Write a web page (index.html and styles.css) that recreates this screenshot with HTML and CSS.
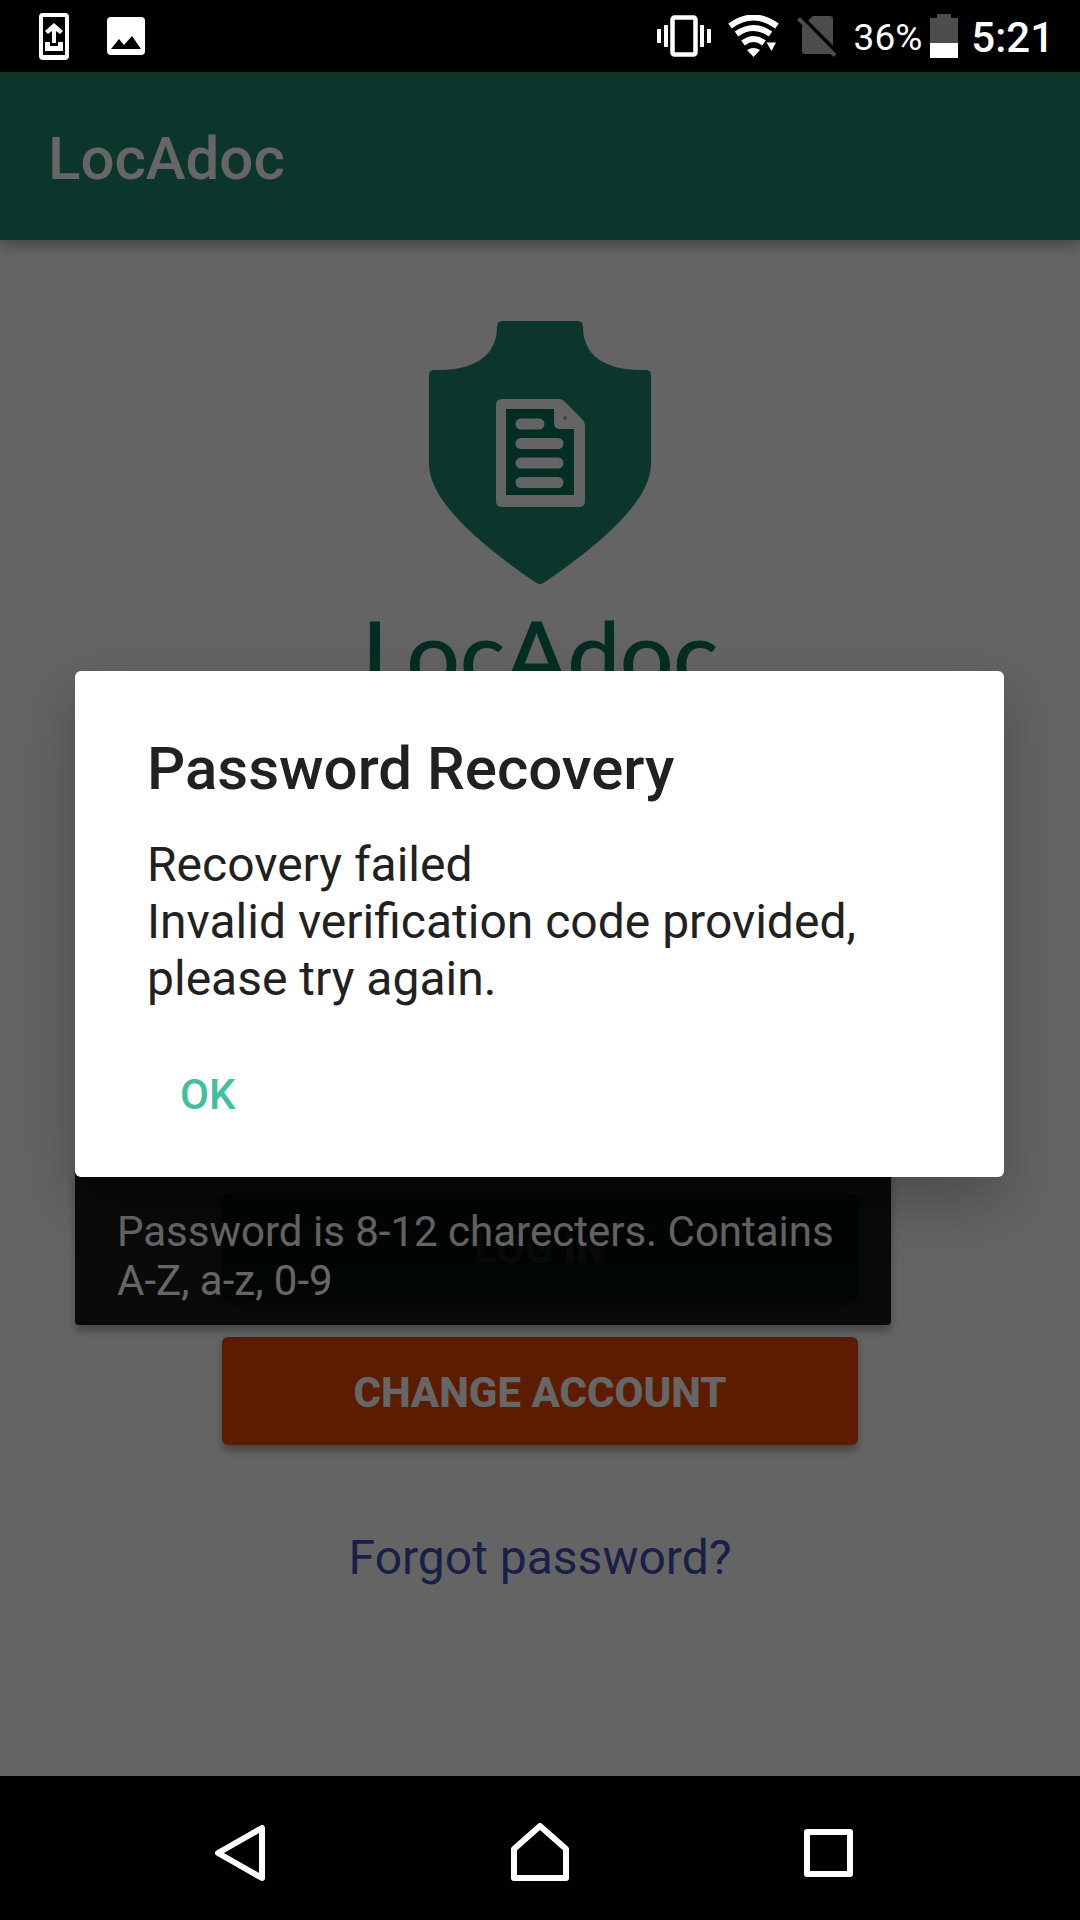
FILE: index.html
```html
<!DOCTYPE html>
<html lang="en">
<head>
<meta charset="utf-8">
<meta name="viewport" content="width=device-width, initial-scale=1">
<title>LocAdoc</title>
<link rel="stylesheet" href="styles.css">
</head>
<body>
<header class="status">
  <div class="status-left">
    <svg width="30" height="48" viewBox="0 0 30 48" aria-hidden="true"><path fill="#fff" fill-rule="evenodd" d="M4 1h22a4 4 0 0 1 4 4v39a4 4 0 0 1-4 4H4a4 4 0 0 1-4-4V5a4 4 0 0 1 4-4zm0 4v38h22V5z"/><path fill="#fff" d="M15 11l9 8-3 3-4-3v12h-4V19l-4 3-3-3zM6 30h5v4h8v-4h5v9H6z"/></svg>
    <svg width="38" height="38" viewBox="0 0 38 38" aria-hidden="true"><rect width="38" height="38" rx="4" fill="#fff"/><path d="M4 32l8-10 5 6 8-9 9 13z"/></svg>
  </div>
  <div class="status-right">
    <svg width="54" height="42" viewBox="0 0 54 42" aria-hidden="true"><rect x="15.500" y="2.500" width="23" height="37" rx="2" fill="none" stroke="#fff" stroke-width="4.500"/><path fill="#fff" d="M0 14h4v14H0zM7 10h4v22H7zM43 10h4v22h-4zM50 14h4v14h-4z"/></svg>
    <svg width="52" height="42" viewBox="0 0 52 42" aria-hidden="true"><g fill="none" stroke="#fff" stroke-width="6"><path d="M2 11Q25.500-6 49 11"/><path d="M8.500 19Q25.500 7 42.500 19"/><path d="M15 28Q25.500 20 36 28"/></g><path fill="#fff" d="M19 35q6.500-4 13 0l-6.500 7zM38.500 27.500H48l-4.500 8.500z"/></svg>
    <svg width="40" height="42" viewBox="0 0 40 42" aria-hidden="true"><path fill="#4d4d4d" d="M16 1h17q3 0 3 3v33q0 2-2 2H8q-3 0-3-3V12z"/><path d="M3 1l37 37" stroke="#000" stroke-width="5"/><path d="M1.500 3.500l36.500 37" stroke="#4d4d4d" stroke-width="4"/></svg>
    <span class="percent">36%</span>
    <svg class="battery" width="28" height="44" viewBox="0 0 28 44" aria-hidden="true"><path fill="#4d4d4d" d="M7 0h14v4h7v25H0V4h7z"/><path fill="#fff" d="M0 29h28v15H0z"/></svg>
    <span class="time">5:21</span>
  </div>
</header>

<div class="screen">
  <div class="appbar"><h1 class="appbar-title">LocAdoc</h1></div>
  <main class="content">
    <div class="brand">
      <svg width="224" height="264" viewBox="0 0 224 264" aria-hidden="true">
        <path fill="#20876b" d="M74 0h76q5 0 5 6c0 27 20 44 62 43q6-1 6 6v88c0 35-46 77-106 118q-5 4-10 0C47 220 1 178 1 143V55q0-7 6-6c42 1 62-16 62-43q0-6 5-6z"/>
        <path fill="#0a7357" d="M73 83h64l13 14v81H73z"/>
        <path fill="#fafafa" fill-rule="evenodd" d="M74 78h56q4 0 6 2l18 18q3 3 3 6v76q0 6-6 6H74q-6 0-6-6V84q0-6 6-6zm4 10v86h68v-66h-14q-6 0-6-6V88z"/>
        <path fill="none" stroke="#fafafa" stroke-width="11" stroke-linecap="round" d="M93 103h18M93 122.500h37M93 142h37M93 161.500h37"/>
        <circle cx="137" cy="97" r="2" fill="#8fb5a9"/>
      </svg>
      <p class="wordmark">LocAdoc</p>
    </div>
    <div class="actions">
      <button class="btn btn-login" type="button">LOG IN</button>
      <button class="btn btn-change" type="button">CHANGE ACCOUNT</button>
      <div class="hint">Password is 8-12 charecters. Contains A-Z, a-z, 0-9</div>
    </div>
    <a class="forgot" href="#">Forgot password?</a>
  </main>
  <div class="scrim">
    <section class="dialog" role="alertdialog" aria-labelledby="dialog-title">
      <h2 class="dialog-title" id="dialog-title">Password Recovery</h2>
      <p class="dialog-text">Recovery failed<br>Invalid verification code provided, please try again.</p>
      <button class="dialog-ok" type="button">OK</button>
    </section>
  </div>
</div>

<nav class="navbar">
  <button class="nav-btn" type="button" aria-label="Back"><svg width="76" height="60" viewBox="0 0 76 60" aria-hidden="true"><path d="M48 5v50L4 30z"/></svg></button>
  <button class="nav-btn" type="button" aria-label="Home"><svg width="60" height="60" viewBox="0 0 60 60" aria-hidden="true"><path d="M4 26L30 3l26 23v29H4z"/></svg></button>
  <button class="nav-btn" type="button" aria-label="Recent apps"><svg width="60" height="60" viewBox="0 0 60 60" aria-hidden="true"><path d="M9 9h43v42H9z"/></svg></button>
</nav>
</body>
</html>
```
FILE: styles.css
```css
* { box-sizing: border-box; }

body {
  margin: 0;
  min-height: 100vh;
  display: flex;
  flex-direction: column;
  background: #000;
  font-family: Roboto, "Liberation Sans", sans-serif;
}

h1, h2, p { margin: 0; }

svg { display: block; flex: none; }

button {
  margin: 0;
  padding: 0;
  border: 0;
  background: none;
  font-family: inherit;
}

/* System status bar */
.status {
  height: 72px;
  padding: 0 26px 0 39px;
  display: flex;
  align-items: center;
  justify-content: space-between;
  color: #fff;
}

.status-left { display: flex; align-items: center; gap: 38px; }

.status-right { display: flex; align-items: center; gap: 17px; }

.percent { padding-top: 4px; font-size: 37px; line-height: 48px; }

.battery { margin: 0 -4px 0 -9px; }

.time { padding-top: 4px; font-size: 42px; line-height: 48px; font-weight: 500; }

/* App */
.screen {
  position: relative;
  flex: 1;
  display: flex;
  flex-direction: column;
  background: #fafafa;
}

.appbar {
  height: 168px;
  padding: 6px 48px 0;
  display: flex;
  align-items: center;
  background: #20876b;
  box-shadow: 0 6px 12px rgba(0, 0, 0, 0.3);
}

.appbar-title {
  font-size: 60px;
  line-height: 72px;
  font-weight: 500;
  color: #fff;
}

.content {
  flex: 1;
  display: flex;
  flex-direction: column;
  align-items: center;
  padding: 81px 75px 0;
}

.brand {
  display: flex;
  flex-direction: column;
  align-items: center;
  gap: 12px;
}

.wordmark {
  font-family: Lato, sans-serif;
  font-size: 94px;
  line-height: 112px;
  color: #0a7357;
  -webkit-text-stroke: 1px #0a7357;
}

.actions {
  position: relative;
  align-self: stretch;
  margin-top: 484px;
  display: flex;
  flex-direction: column;
  align-items: center;
  gap: 36px;
}

.btn {
  width: 636px;
  max-width: 100%;
  height: 108px;
  padding-top: 4px;
  border-radius: 6px;
  font-size: 42px;
  line-height: 48px;
  font-weight: 800;
  color: #fff;
  box-shadow: 0 6px 9px rgba(0, 0, 0, 0.3);
}

.btn-login { background: #20876b; }

.btn-change { background: #e64600; }

.hint {
  position: absolute;
  left: 0;
  bottom: 120px;
  width: 816px;
  max-width: 100%;
  padding: 36px 42px 20px;
  border-top: 6px solid #b00020;
  border-radius: 0 0 4px 4px;
  background: rgba(0, 0, 0, 0.9);
  box-shadow: 0 6px 9px rgba(0, 0, 0, 0.3);
  font-size: 42px;
  line-height: 49px;
  color: #fff;
}

.forgot {
  margin-top: 84px;
  font-size: 48px;
  line-height: 57px;
  color: #3f51b5;
  text-decoration: none;
}

/* Dialog */
.scrim {
  position: absolute;
  inset: 0;
  padding: 0 76px 0 75px;
  display: flex;
  align-items: center;
  justify-content: center;
  background: rgba(0, 0, 0, 0.6);
}

.dialog {
  flex: 1;
  padding: 62px 72px 28px;
  display: flex;
  flex-direction: column;
  align-items: flex-start;
  border-radius: 6px;
  background: #fff;
  color: #212121;
  box-shadow: 0 24px 60px rgba(0, 0, 0, 0.25);
}

.dialog-title {
  font-size: 60px;
  line-height: 72px;
  font-weight: 500;
}

.dialog-text {
  margin-top: 31px;
  font-size: 48px;
  line-height: 57px;
}

.dialog-ok {
  height: 108px;
  margin-top: 34px;
  padding: 0 33px;
  font-size: 42px;
  line-height: 48px;
  font-weight: 500;
  color: #43bf9c;
}

/* System navigation */
.navbar {
  height: 144px;
  padding: 10px 0 0;
  display: flex;
  justify-content: center;
}

.nav-btn {
  width: 288px;
  display: flex;
  align-items: center;
  justify-content: center;
}

.nav-btn path {
  fill: none;
  stroke: #fff;
  stroke-width: 6;
  stroke-linejoin: round;
}
```
